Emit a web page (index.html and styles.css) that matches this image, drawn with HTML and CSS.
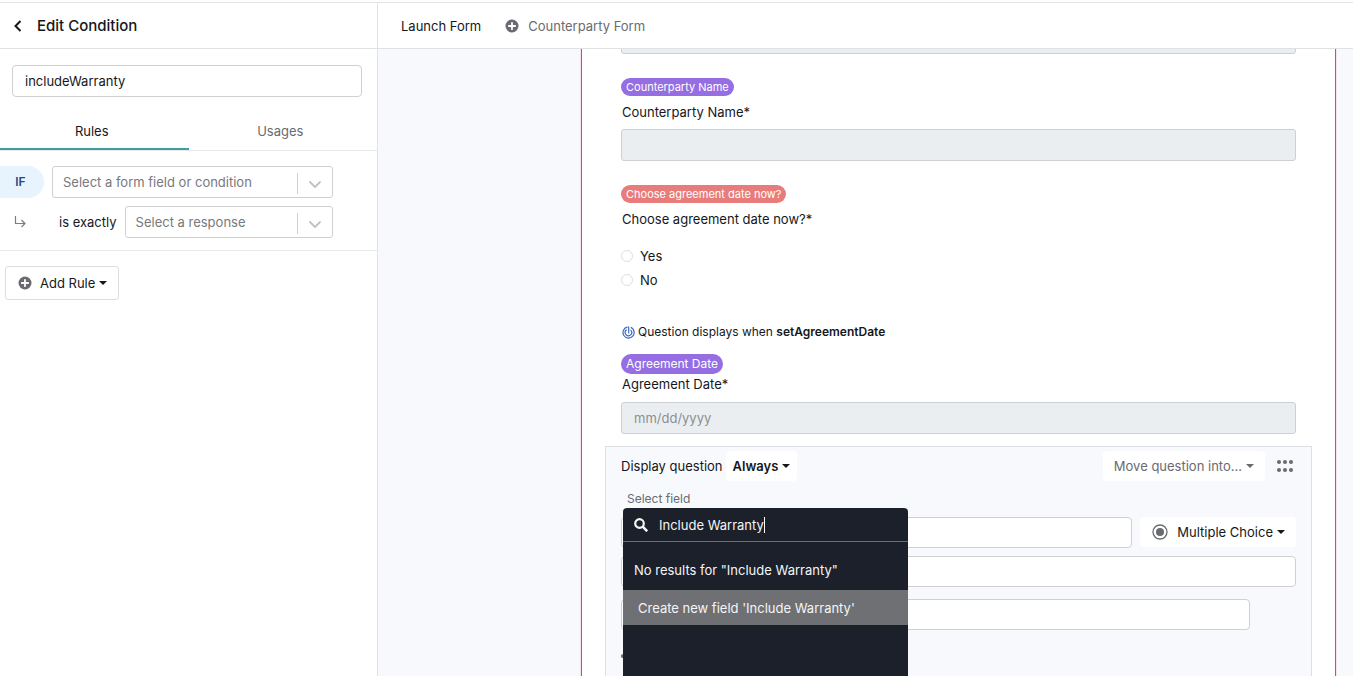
FILE: index.html
```html
<!DOCTYPE html>
<html lang="en">
<head>
    <meta charset="UTF-8">
    <title>Edit Condition</title>
    <meta name="viewport" content="width=device-width, initial-scale=1.0">
    <link rel="stylesheet" href="styles.css">
</head>
<body>
    <!-- shared icons -->
    <svg class="sprite" aria-hidden="true">
        <symbol id="icon-plus" viewBox="0 0 14 14">
            <circle cx="7" cy="7" r="6.5" fill="currentColor"/>
            <path d="M7 3.8v6.4M3.8 7h6.4" stroke="#fff" stroke-width="1.8" stroke-linecap="round"/>
        </symbol>
        <symbol id="icon-chevron" viewBox="0 0 14 14">
            <path d="M2 5l5 5 5-5" fill="none" stroke="currentColor" stroke-width="1.8" stroke-linecap="round" stroke-linejoin="round"/>
        </symbol>
    </svg>

    <div class="app">
        <aside class="sidebar">
            <header class="sidebar-header">
                <button class="back" type="button" aria-label="Back">
                    <svg width="10" height="12" viewBox="0 0 10 12"><path d="M7.5 1L2.5 6l5 5" fill="none" stroke="currentColor" stroke-width="2"/></svg>
                </button>
                <h1>Edit Condition</h1>
            </header>

            <div class="name-row">
                <input type="text" class="text-input" value="includeWarranty" aria-label="Condition name">
            </div>

            <nav class="tabs">
                <a href="#rules" class="tab active">Rules</a>
                <a href="#usages" class="tab">Usages</a>
            </nav>

            <div class="rules" id="rules">
                <div class="rule-row">
                    <span class="if-pill">IF</span>
                    <div class="select">
                        <select aria-label="Form field or condition">
                            <option>Select a form field or condition</option>
                        </select>
                        <svg class="chevron"><use href="#icon-chevron"/></svg>
                    </div>
                </div>
                <div class="rule-row">
                    <svg class="branch" width="12" height="12" viewBox="0 0 12 12"><path d="M1.5 0v7.5h9M7.5 4l3.5 3.5L7.5 11" fill="none" stroke="currentColor" stroke-width="1.2"/></svg>
                    <label class="operator" for="response">is exactly</label>
                    <div class="select">
                        <select id="response">
                            <option>Select a response</option>
                        </select>
                        <svg class="chevron"><use href="#icon-chevron"/></svg>
                    </div>
                </div>
            </div>

            <button class="add-rule caret" type="button"><svg class="plus"><use href="#icon-plus"/></svg>Add Rule</button>
        </aside>

        <main class="main">
            <nav class="form-tabs">
                <a href="#launch" class="form-tab active">Launch Form</a>
                <a href="#counterparty" class="form-tab"><svg class="plus"><use href="#icon-plus"/></svg>Counterparty Form</a>
            </nav>

            <div class="canvas">
                <form class="form-page" id="launch">
                    <input type="text" class="field" aria-label="Previous question" disabled>

                    <div class="question">
                        <span class="tag purple">Counterparty Name</span>
                        <label for="counterpartyName">Counterparty Name*</label>
                        <input type="text" class="field" id="counterpartyName" disabled>
                    </div>

                    <fieldset class="question">
                        <span class="tag coral">Choose agreement date now?</span>
                        <legend class="sr-only">Choose agreement date</legend>
                        <p>Choose agreement date now?*</p>
                        <div class="options">
                            <label><input type="radio" name="dateNow">Yes</label>
                            <label><input type="radio" name="dateNow">No</label>
                        </div>
                    </fieldset>

                    <div class="question date-question">
                        <div class="display-rule">
                            <svg width="13" height="13" viewBox="0 0 14 14" fill="none" stroke="currentColor" stroke-width="1.3" stroke-linecap="round">
                                <path d="M5.500 1.200A6 6 0 1 0 9.500 1.500c2.200 1 3.500 3 3.500 5.300"/>
                                <path d="M4.600 4.300A3.500 3.500 0 1 0 9.600 4.600"/>
                                <path d="M7.200 1v6.500"/>
                            </svg>
                            <span>Question displays when <strong>setAgreementDate</strong></span>
                        </div>
                        <span class="tag purple large">Agreement Date</span>
                        <label for="agreementDate">Agreement Date*</label>
                        <input type="text" class="field" id="agreementDate" placeholder="mm/dd/yyyy" disabled>
                    </div>

                    <section class="editor">
                        <div class="editor-top">
                            <span>Display question</span>
                            <button class="menu-button always caret" type="button">Always</button>
                            <button class="menu-button move caret" type="button">Move question into...</button>
                            <svg class="drag" width="16" height="12" viewBox="0 0 16 12" fill="currentColor">
                                <circle cx="2" cy="2" r="2"/><circle cx="8" cy="2" r="2"/><circle cx="14" cy="2" r="2"/>
                                <circle cx="2" cy="10" r="2"/><circle cx="8" cy="10" r="2"/><circle cx="14" cy="10" r="2"/>
                            </svg>
                        </div>

                        <div class="field-picker">
                            <label for="fieldSearch">Select field</label>
                            <div class="dropdown">
                                <div class="search">
                                    <svg width="14" height="14" viewBox="0 0 14 14" fill="none" stroke="currentColor" stroke-width="2.2"><circle cx="5.500" cy="5.500" r="4.300"/><path d="M8.700 8.700l4.500 4.500" stroke-width="2.600"/></svg>
                                    <input type="text" id="fieldSearch" value="Include Warranty">
                                    <span class="cursor"></span>
                                </div>
                                <p class="no-results">No results for "Include Warranty"</p>
                                <button class="create" type="button">Create new field 'Include Warranty'</button>
                            </div>
                        </div>

                        <div class="editor-row">
                            <input type="text" class="text-input" aria-label="Question">
                            <button class="menu-button type caret" type="button">
                                <svg width="16" height="16" viewBox="0 0 16 16"><circle cx="8" cy="8" r="7" fill="none" stroke="currentColor" stroke-width="1.300"/><circle cx="8" cy="8" r="4" fill="currentColor"/></svg>Multiple Choice
                            </button>
                        </div>
                        <input type="text" class="text-input" aria-label="Help text">
                        <div class="option-row">
                            <input type="text" class="text-input" aria-label="Option 1">
                        </div>
                        <button class="add-option" type="button" aria-label="Add option"><svg width="4" height="4"><use href="#icon-plus"/></svg></button>
                    </section>
                </form>
            </div>
        </main>
    </div>
</body>
</html>
```
FILE: styles.css
```css
* {
    margin: 0;
    padding: 0;
    box-sizing: border-box;
}
body {
    font-family: Inter, "Liberation Sans", sans-serif;
    font-size: 13px;
    line-height: 20px;
    color: #15171c;
    background: #fff;
    overflow: hidden;
}
input, select, button {
    font: inherit;
    color: inherit;
}
button {
    border: none;
    background: none;
    cursor: pointer;
}
a {
    color: inherit;
    text-decoration: none;
}
svg {
    display: block;
    flex: none;
}
.sprite {
    display: none;
}
.sr-only {
    position: absolute;
    width: 1px;
    height: 1px;
    overflow: hidden;
    opacity: 0;
}
.app {
    display: flex;
    height: calc(100vh - 2px);
    margin-top: 2px;
    border-top: 1px solid #e2e4e6;
}
.plus {
    width: 14px;
    height: 14px;
    color: #696b70;
}
.caret::after {
    content: "";
    border: 4px solid transparent;
    border-top-color: currentColor;
    border-bottom: 0;
    margin-left: 4px;
}
.text-input {
    display: block;
    width: 100%;
    height: 32px;
    padding: 0 12px;
    border: 1px solid #ced0d4;
    border-radius: 4px;
    background: #fff;
}

/* sidebar */
.sidebar {
    flex: none;
    width: 378px;
    border-right: 1px solid #dfe2e6;
}
.sidebar-header {
    display: flex;
    align-items: center;
    gap: 14px;
    height: 46px;
    padding: 0 13px;
    border-bottom: 1px solid #dfe2e4;
}
.sidebar-header h1 {
    font-size: 15px;
    font-weight: 500;
}
.name-row {
    padding: 16px 15px 13px 12px;
}
.tabs {
    display: flex;
    border-bottom: 1px solid #e8eaec;
}
.tab {
    flex: 1;
    height: 40px;
    padding: 11px 5px 0 0;
    line-height: 20px;
    text-align: center;
    color: #696b70;
}
.tab.active {
    color: #15171c;
    border-bottom: 2px solid #3f9d9f;
    margin-bottom: -1px;
}
.rules {
    display: grid;
    gap: 8px;
    padding: 15px 44px 12px 0;
    border-bottom: 1px solid #e8eaec;
}
.rule-row {
    display: flex;
    align-items: center;
    gap: 8px;
}
.if-pill {
    width: 44px;
    height: 32px;
    padding-right: 3px;
    border-radius: 0 16px 16px 0;
    background: #e8f4fd;
    color: #2b4580;
    font-size: 12px;
    font-weight: 600;
    line-height: 32px;
    text-align: center;
}
.branch {
    margin: 0 25px 0 14px;
    color: #7b7d82;
}
.select {
    position: relative;
    flex: 1;
}
.select::before {
    content: "";
    position: absolute;
    top: 7px;
    bottom: 4px;
    right: 35px;
    border-left: 1px solid #ced0d4;
}
.select select {
    display: block;
    appearance: none;
    width: 100%;
    height: 32px;
    padding: 0 36px 0 10px;
    border: 1px solid #ced0d4;
    border-radius: 3px;
    background: #fff;
    color: #77797e;
}
.chevron {
    position: absolute;
    top: 11px;
    right: 11px;
    width: 14px;
    height: 14px;
    color: #bfc1c5;
    pointer-events: none;
}
.add-rule {
    display: flex;
    align-items: center;
    height: 34px;
    margin: 15px 5px;
    padding: 0 11px 0 12px;
    border: 1px solid #dcdee1;
    border-radius: 3px;
}
.add-rule .plus {
    margin-right: 8px;
}

/* form preview */
.main {
    flex: 1;
    min-width: 0;
    display: flex;
    flex-direction: column;
}
.form-tabs {
    display: flex;
    align-items: center;
    gap: 24px;
    flex: none;
    height: 46px;
    padding: 0 23px;
    border-bottom: 1px solid #dfe2e4;
}
.form-tab {
    display: flex;
    align-items: center;
    gap: 9px;
    color: #696b70;
}
.form-tab.active {
    color: #15171c;
}
.canvas {
    flex: 1;
    min-height: 0;
    overflow: hidden;
    padding: 0 17px 0 203px;
    background: #f8f9fc;
}
/* the page is scrolled, so the first question is cut by the tab bar */
.form-page {
    margin-top: -27px;
    padding: 0 39px;
    border-left: 1px solid #d9447f;
    border-right: 1px solid #d9447f;
    box-shadow: 0 0 0 1px #fadfec;
    background: #fff;
}
.field {
    display: block;
    width: 100%;
    height: 32px;
    padding: 0 12px;
    border: 1px solid #ccd0d3;
    border-radius: 3px;
    background: #ebeef0;
}
.field::placeholder {
    color: #8c8f94;
}
.question {
    display: flex;
    flex-direction: column;
    align-items: flex-start;
    margin-top: 24px;
    border: none;
}
.question > label,
.question > p {
    margin: 6px 1px 7px;
}
.tag {
    height: 18px;
    padding: 0 5px;
    border-radius: 10px;
    color: #fff;
    font-size: 11px;
    line-height: 18px;
}
.tag.large {
    height: 20px;
    font-size: 12px;
    line-height: 20px;
}
.purple {
    background: #946ee2;
}
.coral {
    background: #e87c7a;
}
.options {
    display: grid;
    gap: 4px;
    margin-top: 10px;
}
.options label {
    display: flex;
    align-items: center;
    gap: 7px;
}
.options input {
    appearance: none;
    width: 12px;
    height: 12px;
    border: 1px solid #dfe0e2;
    border-radius: 50%;
}
.date-question {
    margin-top: 32px;
}
.display-rule {
    display: flex;
    align-items: center;
    gap: 3px;
    margin: 0 1px 12px;
    font-size: 12px;
}
.display-rule strong {
    font-weight: 600;
}
.display-rule svg {
    color: #3c6bc0;
}
.date-question > label {
    margin: 0 1px 8px;
}

/* question editor */
.editor {
    margin: 12px -16px 0;
    padding: 4px 15px 60px;
    border: 1px solid #dcdfe3;
    background: #f8f9fc;
}
.editor .text-input {
    height: 31px;
}
.editor > .text-input {
    margin-bottom: 12px;
}
.editor-top {
    display: flex;
    align-items: center;
}
.menu-button {
    display: flex;
    align-items: center;
    height: 30px;
    border-radius: 4px;
    background: #fff;
}
.always {
    margin-left: 3px;
    padding: 0 7px;
    font-weight: 600;
}
.move {
    margin-left: auto;
    padding: 0 11px;
    color: #696b70;
}
.drag {
    margin: 0 3px 0 12px;
    color: #696b70;
}
.field-picker {
    position: relative;
    height: 36px;
    padding: 8px 6px 0;
    font-size: 12px;
    color: #696b70;
}
.dropdown {
    position: absolute;
    top: 27px;
    left: 2px;
    z-index: 1;
    width: 285px;
    height: 200px;
    border-radius: 4px;
    background: #1c202b;
    color: #f4f5f6;
    font-size: 13px;
}
.search {
    display: flex;
    align-items: center;
    height: 34px;
    padding: 0 11px;
    border-bottom: 1px solid #6a6d75;
}
.search input {
    field-sizing: content;
    margin-left: 11px;
    border: none;
    outline: none;
    background: none;
}
.cursor {
    height: 16px;
    border-left: 1px solid #fff;
}
.no-results {
    padding: 18px 11px 10px;
}
.create {
    display: block;
    width: 100%;
    height: 35px;
    padding: 0 15px;
    background: #6f7073;
    text-align: left;
}
.editor-row {
    display: flex;
    gap: 8px;
    margin-bottom: 8px;
}
.editor-row .text-input {
    flex: 1;
    min-width: 0;
}
.type {
    padding: 0 11px 0 12px;
}
.type svg {
    margin-right: 9px;
    color: #696b70;
}
.option-row {
    padding-right: 46px;
}
.add-option {
    display: block;
    margin-top: 24px;
}
```
